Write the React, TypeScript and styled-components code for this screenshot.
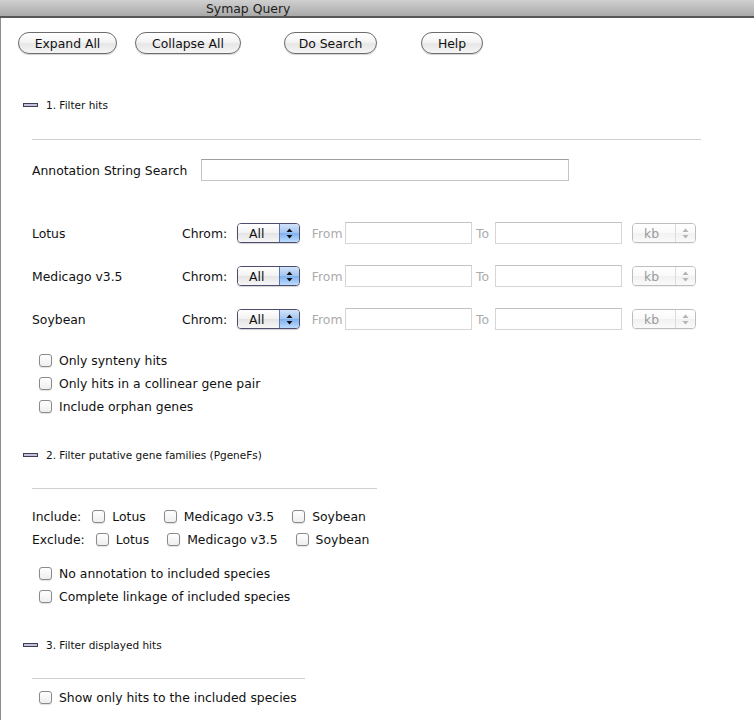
import React from "react";
import styled, { createGlobalStyle } from "styled-components";

const Global = createGlobalStyle`
  html, body { margin: 0; padding: 0; background: #fff; }
  body {
    font-family: "DejaVu Sans", "Liberation Sans", sans-serif;
    font-size: 12.4px;
    color: #111;
  }
  * { box-sizing: border-box; }
`;

const Frame = styled.div`
  width: 754px;
  height: 720px;
  display: flex;
  flex-direction: column;
  overflow: hidden;
`;

const TitleBar = styled.div`
  flex: none;
  height: 18px;
  background: linear-gradient(#d0d0d0, #a9a9a9);
  border-bottom: 2px solid #565656;
  display: flex;
  align-items: center;
  padding-left: 206px;
  color: #1c1c1c;
  font-size: 12.4px;
`;

const Body = styled.div`
  flex: 1;
  border-left: 1px solid #8c8c8c;
  display: flex;
  flex-direction: column;
`;

const Toolbar = styled.div`
  display: flex;
  padding: 14px 0 0 17px;
`;

const PillButton = styled.button<{ $w: number; $ml: number }>`
  width: ${(p) => p.$w}px;
  margin-left: ${(p) => p.$ml}px;
  height: 22px;
  border-radius: 11px;
  border: 1px solid #6c6c6c;
  background: linear-gradient(#ffffff, #f4f4f4 45%, #e6e6e6 55%, #f6f6f6);
  box-shadow: 0 1px 1px rgba(0, 0, 0, 0.18);
  font-family: inherit;
  font-size: 12.4px;
  color: #111;
  padding: 0;
  display: flex;
  align-items: center;
  justify-content: center;
`;

const SectionHeader = styled.div<{ $mt: number }>`
  display: flex;
  align-items: center;
  height: 14px;
  margin-top: ${(p) => p.$mt}px;
  padding-left: 22px;
  font-size: 10.5px;
  color: #111;
`;

const CollapseIcon = styled.span`
  width: 15px;
  height: 4px;
  border: 1px solid #3e3e52;
  background: #c2c2da;
  margin-right: 8px;
  flex: none;
`;

const Divider = styled.div<{ $w: number; $mt: number }>`
  width: ${(p) => p.$w}px;
  height: 1px;
  background: #cfcfcf;
  margin: ${(p) => p.$mt}px 0 0 31px;
`;

const AnnotRow = styled.div`
  display: flex;
  align-items: center;
  height: 22px;
  margin-top: 19px;
  padding-left: 31px;
`;

const AnnotLabel = styled.span`
  width: 169px;
  flex: none;
`;

const TextField = styled.div<{ $w: number; $disabled?: boolean }>`
  width: ${(p) => p.$w}px;
  height: 22px;
  flex: none;
  background: #fff;
  border: 1px solid ${(p) => (p.$disabled ? "#d6d6d6" : "#c4c4c4")};
  border-top-color: ${(p) => (p.$disabled ? "#c2c2c2" : "#9e9e9e")};
`;

const ChromRows = styled.div`
  display: flex;
  flex-direction: column;
  gap: 21px;
  margin-top: 41px;
  padding-left: 31px;
`;

const ChromRow = styled.div`
  display: flex;
  align-items: center;
  height: 22px;
`;

const SpeciesLabel = styled.span`
  width: 150px;
  flex: none;
`;

const FieldLabel = styled.span<{ $w: number; $muted?: boolean }>`
  width: ${(p) => p.$w}px;
  color: ${(p) => (p.$muted ? "#ababab" : "#111")};
  flex: none;
  white-space: nowrap;
`;

const Popup = styled.div<{ $w: number; $disabled?: boolean }>`
  width: ${(p) => p.$w}px;
  height: 20px;
  flex: none;
  display: flex;
  border: 1px solid ${(p) => (p.$disabled ? "#bdbdbd" : "#4c4c6c")};
  border-radius: 4px;
  overflow: hidden;
  box-shadow: 0 1px 1px rgba(0, 0, 0, ${(p) => (p.$disabled ? 0.06 : 0.18)});
`;

const PopupValue = styled.div<{ $disabled?: boolean }>`
  flex: 1;
  display: flex;
  align-items: center;
  padding-left: 11px;
  color: ${(p) => (p.$disabled ? "#9a9a9a" : "#111")};
  background: ${(p) =>
    p.$disabled
      ? "linear-gradient(#ffffff, #f9f9f9 50%, #f1f1f1 51%, #fafafa)"
      : "linear-gradient(#ffffff, #f2f2f2 50%, #e4e4e4 51%, #f6f6f6)"};
`;

const PopupArrows = styled.div<{ $disabled?: boolean }>`
  width: 20px;
  flex: none;
  display: flex;
  align-items: center;
  justify-content: center;
  border-left: 1px solid ${(p) => (p.$disabled ? "#dcdcdc" : "#5a74b4")};
  background: ${(p) =>
    p.$disabled
      ? "linear-gradient(#ffffff, #f9f9f9 50%, #f1f1f1 51%, #fafafa)"
      : "linear-gradient(#d2e3f9, #a3c4f0 50%, #7eb0ef 51%, #bcdcfd)"};
`;

const CheckList = styled.div<{ $mt: number }>`
  display: flex;
  flex-direction: column;
  margin-top: ${(p) => p.$mt}px;
  padding-left: 38px;
`;

const CheckItem = styled.label<{ $ml?: number }>`
  display: flex;
  align-items: center;
  height: 23px;
  margin-left: ${(p) => p.$ml ?? 0}px;
  flex: none;
`;

const Box = styled.span`
  width: 13px;
  height: 13px;
  flex: none;
  border: 1px solid #8a8a8a;
  border-radius: 3px;
  background: linear-gradient(#ffffff, #eeeeee);
  box-shadow: 0 1px 1px rgba(0, 0, 0, 0.12);
  margin-right: 7px;
`;

const SpeciesGrid = styled.div`
  display: flex;
  flex-direction: column;
  margin-top: 16px;
  padding-left: 31px;
`;

const SpeciesRow = styled.div`
  display: flex;
  align-items: center;
  height: 23px;
`;

const RowLabel = styled.span`
  margin-right: 11px;
  flex: none;
`;

const Arrows = ({ disabled }: { disabled?: boolean }) => (
  <svg width="7" height="11" viewBox="0 0 7 11">
    <path d="M3.5 0.5 L6.5 4 L0.5 4 Z" fill={disabled ? "#b4b4b4" : "#111"} />
    <path d="M3.5 10.5 L6.5 7 L0.5 7 Z" fill={disabled ? "#b4b4b4" : "#111"} />
  </svg>
);

const Check = ({ label, ml }: { label: string; ml?: number }) => (
  <CheckItem $ml={ml}>
    <Box />
    <span>{label}</span>
  </CheckItem>
);

const species = ["Lotus", "Medicago v3.5", "Soybean"];

export default function App() {
  return (
    <Frame>
      <Global />
      <TitleBar>Symap Query</TitleBar>
      <Body>
        <Toolbar>
          <PillButton $w={99} $ml={0}>Expand All</PillButton>
          <PillButton $w={106} $ml={18}>Collapse All</PillButton>
          <PillButton $w={93} $ml={43}>Do Search</PillButton>
          <PillButton $w={62} $ml={44}>Help</PillButton>
        </Toolbar>

        <SectionHeader $mt={44}>
          <CollapseIcon />
          1. Filter hits
        </SectionHeader>
        <Divider $w={669} $mt={27} />
        <AnnotRow>
          <AnnotLabel>Annotation String Search</AnnotLabel>
          <TextField $w={368} />
        </AnnotRow>

        <ChromRows>
          {species.map((s) => (
            <ChromRow key={s}>
              <SpeciesLabel>{s}</SpeciesLabel>
              <FieldLabel $w={55}>Chrom:</FieldLabel>
              <Popup $w={63}>
                <PopupValue>All</PopupValue>
                <PopupArrows>
                  <Arrows />
                </PopupArrows>
              </Popup>
              <FieldLabel $w={45} $muted>&nbsp;&nbsp;&nbsp;From</FieldLabel>
              <TextField $w={127} $disabled />
              <FieldLabel $w={23} $muted>&nbsp;To</FieldLabel>
              <TextField $w={127} $disabled />
              <FieldLabel $w={10} />
              <Popup $w={64} $disabled>
                <PopupValue $disabled>kb</PopupValue>
                <PopupArrows $disabled>
                  <Arrows disabled />
                </PopupArrows>
              </Popup>
            </ChromRow>
          ))}
        </ChromRows>

        <CheckList $mt={19}>
          <Check label="Only synteny hits" />
          <Check label="Only hits in a collinear gene pair" />
          <Check label="Include orphan genes" />
        </CheckList>

        <SectionHeader $mt={30}>
          <CollapseIcon />
          2. Filter putative gene families (PgeneFs)
        </SectionHeader>
        <Divider $w={345} $mt={26} />
        <SpeciesGrid>
          <SpeciesRow>
            <RowLabel>Include:</RowLabel>
            <Check label="Lotus" />
            <Check label="Medicago v3.5" ml={18} />
            <Check label="Soybean" ml={18} />
          </SpeciesRow>
          <SpeciesRow>
            <RowLabel>Exclude:</RowLabel>
            <Check label="Lotus" />
            <Check label="Medicago v3.5" ml={18} />
            <Check label="Soybean" ml={18} />
          </SpeciesRow>
        </SpeciesGrid>
        <CheckList $mt={11}>
          <Check label="No annotation to included species" />
          <Check label="Complete linkage of included species" />
        </CheckList>

        <SectionHeader $mt={30}>
          <CollapseIcon />
          3. Filter displayed hits
        </SectionHeader>
        <Divider $w={273} $mt={26} />
        <CheckList $mt={7}>
          <Check label="Show only hits to the included species" />
        </CheckList>
      </Body>
    </Frame>
  );
}
